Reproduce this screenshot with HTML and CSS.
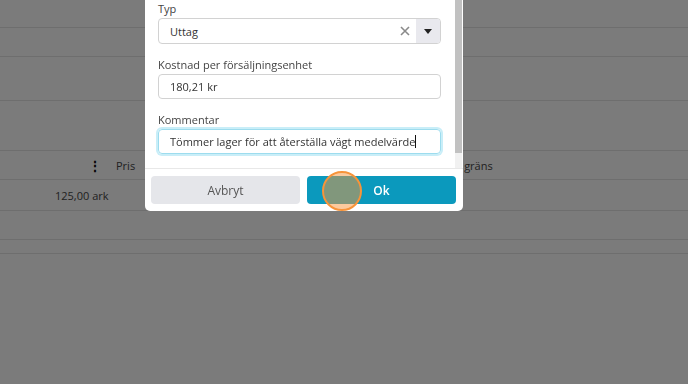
FILE: index.html
```html
<!DOCTYPE html>
<html lang="sv">
<head>
  <meta charset="UTF-8">
  <title>Lagerjustering</title>
  <link rel="stylesheet" href="styles.css">
</head>
<body>
  <div class="page">
    <div class="row r1"></div>
    <div class="row r2"></div>
    <div class="row r3"></div>
    <div class="row r4"></div>
    <div class="row head">
      <span class="kebab">&#8942;</span>
      <span class="col-price">Pris</span>
      <span class="col-limit">gräns</span>
    </div>
    <div class="row item">
      <span class="cell-price">125,00 ark</span>
    </div>
    <div class="row r7"></div>
    <div class="row r8"></div>
  </div>

  <div class="overlay"></div>

  <div class="modal">
    <div class="modal-body">
      <div class="fields">
        <label class="field-label">Typ</label>
        <div class="select">
          <span class="select-value">Uttag</span>
          <span class="select-clear">
            <svg width="10" height="10" viewBox="0 0 10 10"><path d="M1 1L9 9M9 1L1 9" stroke="#8a8a8a" stroke-width="1.6" fill="none"/></svg>
          </span>
          <span class="select-arrow">
            <svg width="8" height="5" viewBox="0 0 8 5"><path d="M0 0h8L4 5z" fill="#222"/></svg>
          </span>
        </div>

        <label class="field-label">Kostnad per försäljningsenhet</label>
        <div class="input">180,21 kr</div>

        <label class="field-label">Kommentar</label>
        <div class="input focused">Tömmer lager för att återställa vägt medelvärde<span class="caret"></span></div>
      </div>
      <div class="scrollbar">
        <div class="thumb"></div>
      </div>
    </div>
    <div class="modal-footer">
      <button class="btn cancel">Avbryt</button>
      <button class="btn ok">Ok</button>
    </div>
  </div>

  <div class="click-mark"></div>
</body>
</html>
```

FILE: styles.css
```css
body {
  margin: 0;
  width: 688px;
  height: 384px;
  overflow: hidden;
  font-family: "Open Sans", "Noto Sans", sans-serif;
  background: #f6f6f6;
  color: #333;
}

/* Page behind the dialog */
.page {
  display: flex;
  flex-direction: column;
}
.row {
  border-bottom: 1px solid #dcdcdc;
  box-sizing: border-box;
  display: flex;
  align-items: center;
  font-size: 11px;
}
.r1 { height: 28px; }
.r2 { height: 29px; }
.r3 { height: 44px; }
.r4 { height: 50px; }
.head { height: 29px; }
.item { height: 31px; }
.r7 { height: 29px; }
.r8 { height: 14px; }

.kebab {
  margin-left: 88px;
  width: 10px;
  font-weight: bold;
  font-size: 14px;
  color: #111;
}
.col-price {
  margin-left: 18px;
  color: #444;
}
.col-limit {
  margin-left: 329px;
  color: #444;
}
.cell-price {
  margin-left: 55px;
  color: #444;
}

.overlay {
  position: fixed;
  inset: 0;
  background: rgba(0, 0, 0, 0.5);
}

/* Dialog */
.modal {
  position: absolute;
  left: 145px;
  top: 0;
  width: 318px;
  height: 211px;
  background: #fff;
  border-radius: 0 0 5px 5px;
  display: flex;
  flex-direction: column;
}
.modal-body {
  height: 168px;
  display: flex;
}
.fields {
  flex: 1;
  padding: 2px 14px 0 13px;
  display: flex;
  flex-direction: column;
}
.field-label {
  font-size: 11px;
  line-height: 14px;
  color: #444;
  margin-bottom: 2px;
}
.select,
.input {
  height: 26px;
  box-sizing: border-box;
  border: 1px solid #d2d2d2;
  border-radius: 4px;
  font-size: 11px;
  color: #333;
  display: flex;
  align-items: center;
  margin-bottom: 14px;
}
.input {
  padding-left: 11px;
}
.select-value {
  flex: 1;
  padding-left: 11px;
}
.select-clear {
  width: 22px;
  display: flex;
  align-items: center;
  justify-content: center;
}
.select-arrow {
  width: 24px;
  height: 24px;
  background: #e9e9ee;
  border-radius: 0 3px 3px 0;
  display: flex;
  align-items: center;
  justify-content: center;
}
.input.focused {
  border-color: #9ddcee;
  box-shadow: 0 0 0 2px #c9eef8;
}
.caret {
  display: inline-block;
  width: 1px;
  height: 13px;
  background: #111;
}

.scrollbar {
  width: 7px;
  margin-right: 1px;
  background: #f1f1f1;
}
.thumb {
  height: 153px;
  background: #c1c1c1;
}

.modal-footer {
  flex: 1;
  border-top: 1px solid #e8e8e8;
  display: flex;
  gap: 7px;
  padding: 7px 7px 0 6px;
}
.btn {
  width: 149px;
  height: 28px;
  border: none;
  border-radius: 4px;
  font-family: inherit;
  font-size: 12px;
}
.cancel {
  background: #e5e6ea;
  color: #555;
}
.ok {
  background: #0b99bd;
  color: #fff;
  font-weight: 600;
}

/* Click indicator */
.click-mark {
  position: absolute;
  left: 322px;
  top: 171px;
  width: 40px;
  height: 40px;
  box-sizing: border-box;
  border-radius: 50%;
  border: 2px solid #f7943a;
  background: rgba(248, 150, 60, 0.5);
}
```
